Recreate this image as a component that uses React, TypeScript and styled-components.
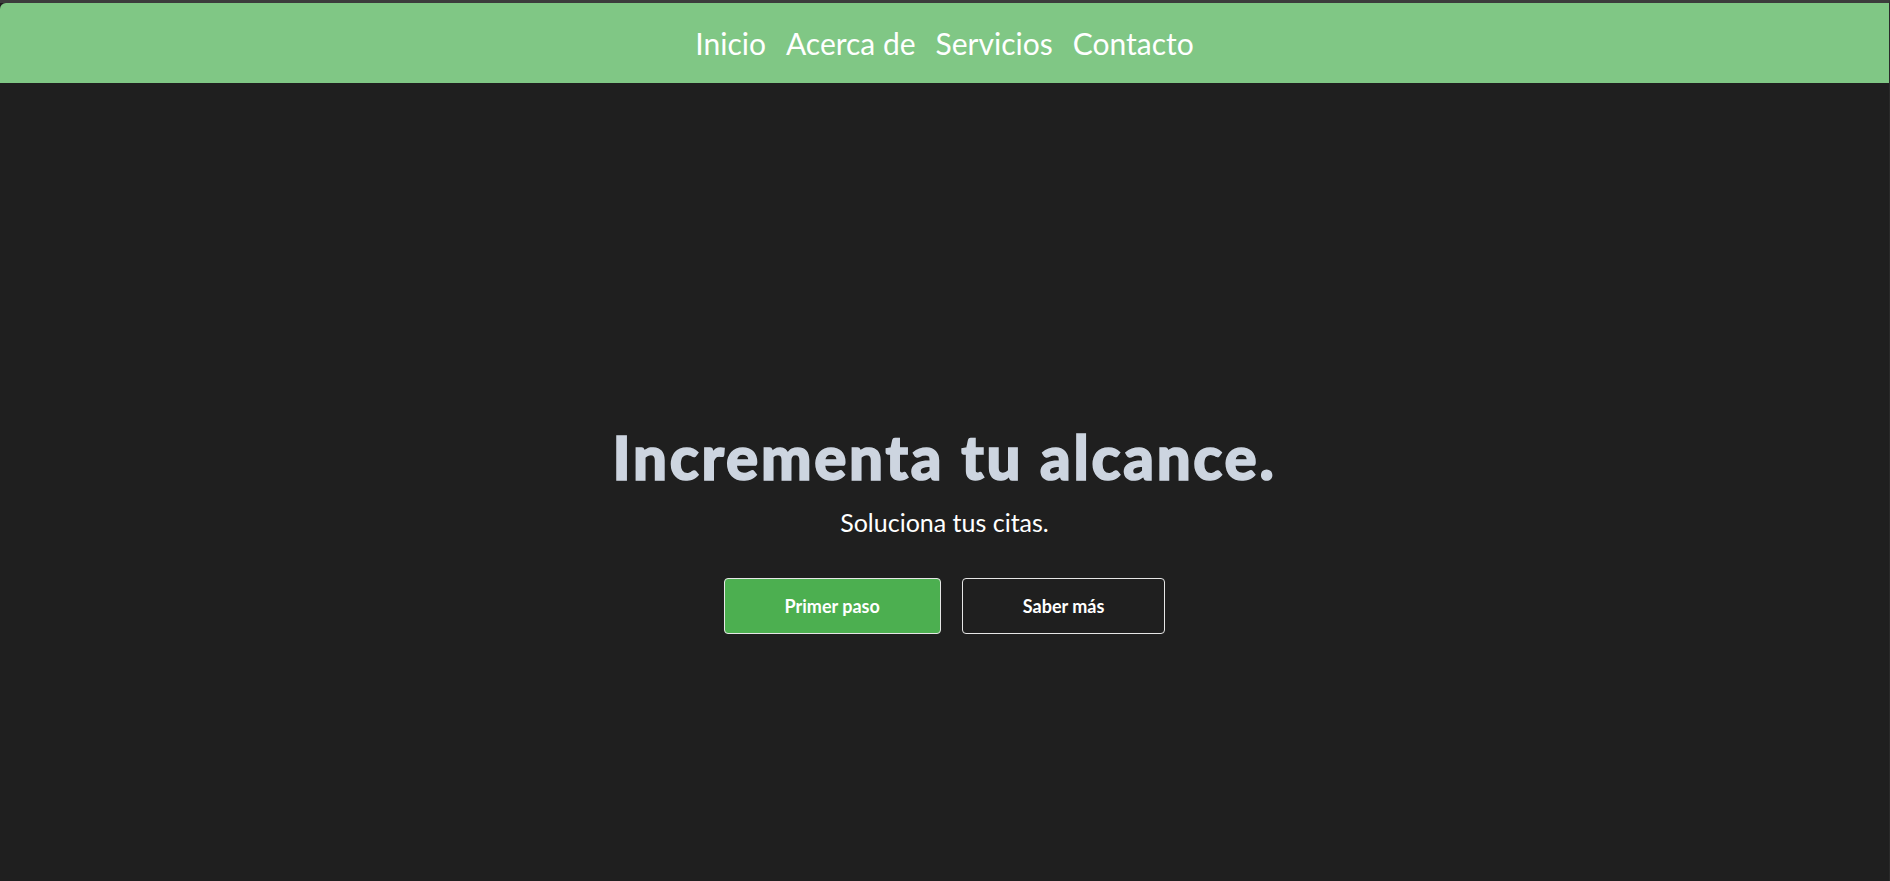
import React from "react";
import styled, { createGlobalStyle } from "styled-components";

const GlobalStyle = createGlobalStyle`
  html, body {
    margin: 0;
    padding: 0;
    background: #1f1f1f;
    font-family: Lato, "Noto Sans", sans-serif;
  }
  * { box-sizing: border-box; }
`;

const Page = styled.div`
  border-top: 3px solid #3c3c3c;
  border-right: 1px solid #2a2a2a;
  background: #1f1f1f;
`;

const Header = styled.header`
  height: 80px;
  background: #80c785;
  border-top-left-radius: 6px;
  display: flex;
  justify-content: center;
  align-items: center;
`;

const Nav = styled.nav`
  display: flex;
  gap: 20px;
`;

const NavLink = styled.a`
  color: #ffffff;
  font-size: 30px;
  text-decoration: none;
  line-height: 1;
`;

const Hero = styled.main`
  height: 881px;
  padding-top: 8px;
  display: flex;
  flex-direction: column;
  align-items: center;
  justify-content: center;
`;

const Title = styled.h1`
  margin: 0;
  font-size: 60px;
  font-weight: 900;
  letter-spacing: 2.7px;
  -webkit-text-stroke: 1.6px #cdd5e0;
  color: #cdd5e0;
  line-height: 1.2;
`;

const Subtitle = styled.p`
  margin: 13px 0 0;
  font-size: 25px;
  color: #ffffff;
  line-height: 1.3;
`;

const Actions = styled.div`
  display: flex;
  gap: 21px;
  margin-top: 39px;
`;

const Button = styled.button<{ $primary?: boolean }>`
  height: 56px;
  padding: 0 60px;
  border: 1px solid #e6e6e6;
  border-radius: 4px;
  background: ${(p) => (p.$primary ? "#4caf50" : "#1f1f1f")};
  color: #ffffff;
  font-family: inherit;
  font-size: 18px;
  font-weight: 700;
  cursor: pointer;
`;

export default function App() {
  return (
    <Page>
      <GlobalStyle />
      <Header>
        <Nav>
          <NavLink href="#">Inicio</NavLink>
          <NavLink href="#">Acerca de</NavLink>
          <NavLink href="#">Servicios</NavLink>
          <NavLink href="#">Contacto</NavLink>
        </Nav>
      </Header>
      <Hero>
        <Title>Incrementa tu alcance.</Title>
        <Subtitle>Soluciona tus citas.</Subtitle>
        <Actions>
          <Button $primary>Primer paso</Button>
          <Button>Saber más</Button>
        </Actions>
      </Hero>
    </Page>
  );
}
